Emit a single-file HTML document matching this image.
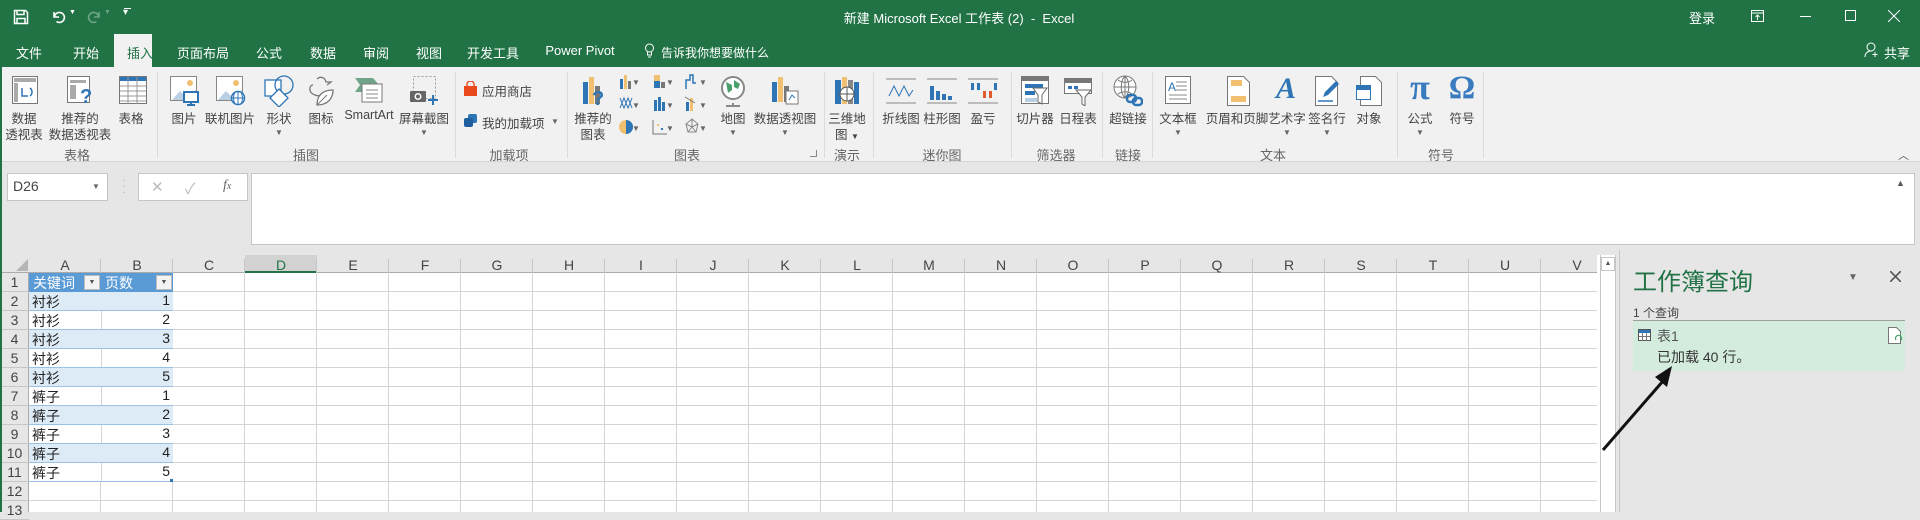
<!DOCTYPE html>
<html><head><meta charset="utf-8"><style>
*{margin:0;padding:0;box-sizing:border-box}
body{width:1920px;height:512px;overflow:hidden;position:relative;background:#e6e6e6;font-family:"Liberation Sans","Microsoft YaHei","Noto Sans CJK SC",sans-serif;color:#444}
.a{position:absolute;white-space:nowrap}
.c{transform:translateX(-50%);text-align:center}
#top{position:absolute;left:0;top:0;width:1920px;height:67px;background:#217346}
.w{color:#fff}
.tab{font-size:13px;color:#fff;top:43px}
#rib{position:absolute;left:0;top:67px;width:1920px;height:95px;background:#f1f1f1;border-bottom:1px solid #d5d5d5}
.l{font-size:12.5px;color:#444}
.g{font-size:13px;color:#666;top:145px}
.sep{position:absolute;top:72px;width:1px;height:86px;background:#dadada}
.dd{font-size:8px;color:#666}
.ic{position:absolute}
</style></head><body>
<div id="top"></div>
<div class="a" style="left:0;top:0;width:2px;height:512px;background:#217346;z-index:5"></div>
<svg class="ic" style="left:13px;top:9px" width="16" height="16" viewBox="0 0 16 16"><path d="M1.5 1.5h11l2 2v11h-13z M4 1.5v4h7v-4 M4 14.5v-5h8v5" fill="none" stroke="#fff" stroke-width="1.5"/></svg>
<svg class="ic" style="left:51px;top:9px" width="16" height="16" viewBox="0 0 16 16"><path d="M3 3v5h5 M3.5 7.5a5 5 0 1 1 2 5" fill="none" stroke="#fff" stroke-width="1.6"/></svg>
<div class="a w" style="left:69px;top:9px;font-size:7px">▼</div>
<svg class="ic" style="left:86px;top:9px" width="16" height="16" viewBox="0 0 16 16"><path d="M13 3v5h-5 M12.5 7.5a5 5 0 1 0 -2 5" fill="none" stroke="#6aa584" stroke-width="1.6"/></svg>
<div class="a" style="left:104px;top:9px;font-size:7px;color:#6aa584">▼</div>
<div class="a w" style="left:123px;top:7px;font-size:10px">▾</div>
<div class="a w" style="left:124px;top:8px;width:7px;height:1px;background:#fff"></div>
<div class="a w c" style="left:959px;top:8px;font-size:13px">新建 Microsoft Excel 工作表 (2)&nbsp; - &nbsp;Excel</div>
<div class="a w c" style="left:1702px;top:8px;font-size:13px">登录</div>
<svg class="ic" style="left:1751px;top:10px" width="13" height="12"><rect x=".5" y=".5" width="12" height="11" fill="none" stroke="#fff"/><path d="M1 3h11 M6.5 10V5 M4.5 7l2-2 2 2" stroke="#fff" fill="none"/></svg>
<div class="a" style="left:1800px;top:16px;width:11px;height:1px;background:#fff"></div>
<div class="a" style="left:1845px;top:10px;width:11px;height:11px;border:1px solid #fff"></div>
<svg class="ic" style="left:1888px;top:10px" width="12" height="12"><path d="M0 0L12 12M12 0L0 12" stroke="#fff"/></svg>
<div class="a" style="left:114px;top:34px;width:38px;height:34px;background:#f1f1f1"></div>
<div class="a tab c" style="left:29px">文件</div>
<div class="a tab c" style="left:86px">开始</div>
<div class="a tab c" style="left:140px;color:#217346">插入</div>
<div class="a tab c" style="left:203px">页面布局</div>
<div class="a tab c" style="left:269px">公式</div>
<div class="a tab c" style="left:323px">数据</div>
<div class="a tab c" style="left:376px">审阅</div>
<div class="a tab c" style="left:429px">视图</div>
<div class="a tab c" style="left:493px">开发工具</div>
<div class="a tab c" style="left:580px">Power Pivot</div>
<svg class="ic" style="left:644px;top:43px" width="11" height="15"><circle cx="5.5" cy="5" r="4" fill="none" stroke="#fff"/><path d="M3.5 9v3h4V9 M4 14h3" stroke="#fff" fill="none"/></svg>
<div class="a tab" style="left:661px;font-size:12px;top:44px">告诉我你想要做什么</div>
<svg class="ic" style="left:1864px;top:42px" width="16" height="16"><circle cx="7" cy="5" r="4" fill="none" stroke="#fff"/><path d="M1 15c0-4 3-6 6-6 M11 10v5 M8.5 12.5h5" stroke="#fff" fill="none"/></svg>
<div class="a tab" style="left:1884px">共享</div>
<div id="rib"></div>
<svg class="ic" style="left:12px;top:76px" width="26" height="28"><rect x=".5" y=".5" width="25" height="27" fill="#fff" stroke="#777"/><rect x="2" y="2" width="22" height="4" fill="#aaa"/><rect x="2" y="7" width="4" height="19" fill="#aaa"/><path d="M10 12v8h6 M18 20a5 5 0 0 0 0-8" stroke="#2e75b6" fill="none" stroke-width="1.5"/></svg>
<div class="a l c" style="left:24px;top:108px">数据</div><div class="a l c" style="left:24px;top:124px">透视表</div>
<svg class="ic" style="left:67px;top:76px" width="28" height="28"><rect x=".5" y=".5" width="22" height="26" fill="#fff" stroke="#777"/><rect x="3" y="4" width="16" height="3" fill="#aaa"/><rect x="3" y="9" width="6" height="14" fill="#aaa"/><text x="13" y="27" font-size="20" font-weight="bold" fill="#2e75b6" font-family="Liberation Sans">?</text></svg>
<div class="a l c" style="left:80px;top:108px">推荐的</div><div class="a l c" style="left:80px;top:124px">数据透视表</div>
<svg class="ic" style="left:119px;top:76px" width="28" height="28"><rect x=".5" y=".5" width="27" height="27" fill="#fff" stroke="#777"/><rect x="1" y="1" width="26" height="4" fill="#2e75b6"/><path d="M1 10h26M1 15h26M1 20h26M1 25h26M9 1v27M18 1v27" stroke="#999"/></svg>
<div class="a l c" style="left:131px;top:108px">表格</div>
<div class="a g c" style="left:77px">表格</div>
<div class="sep" style="left:157px"></div>
<svg class="ic" style="left:170px;top:76px" width="30" height="30"><rect x=".5" y=".5" width="26" height="24" fill="#fff" stroke="#888"/><path d="M2 24l8-9 6 6 10-7v10z" fill="#b9cfe4"/><circle cx="20" cy="7" r="3" fill="#f0c070"/><rect x="14" y="16" width="14" height="10" fill="#fff" stroke="#2e75b6" stroke-width="2"/><path d="M21 27v2M17 29h8" stroke="#2e75b6" stroke-width="2"/></svg>
<div class="a l c" style="left:184px;top:108px">图片</div>
<svg class="ic" style="left:216px;top:76px" width="30" height="30"><rect x=".5" y=".5" width="26" height="24" fill="#fff" stroke="#888"/><path d="M2 24l8-9 6 6 10-7v10z" fill="#b9cfe4"/><circle cx="20" cy="7" r="3" fill="#f0c070"/><circle cx="22" cy="22" r="6.5" fill="#fff" stroke="#2e75b6" stroke-width="1.5"/><path d="M15.5 22h13M22 15.5v13M19 16c-2 4-2 8 0 12M25 16c2 4 2 8 0 12" stroke="#2e75b6" fill="none"/></svg>
<div class="a l c" style="left:230px;top:108px">联机图片</div>
<svg class="ic" style="left:264px;top:75px" width="30" height="32"><rect x="1" y="5" width="16" height="16" fill="#fff" stroke="#2e75b6" stroke-width="1.3"/><circle cx="20" cy="10" r="9" fill="none" stroke="#2e75b6" stroke-width="1.3"/><path d="M15 14l9 9-9 9-9-9z" fill="#fff" stroke="#2e75b6" stroke-width="1.3"/></svg>
<div class="a l c" style="left:279px;top:108px">形状</div><div class="a dd c" style="left:279px;top:128px">▼</div>
<svg class="ic" style="left:307px;top:75px" width="28" height="32"><path d="M6 10c-4 0-5 8 2 10 2 1 4 1 6 0 M10 4c3-3 8-2 9 3l5 0-4 3" fill="none" stroke="#777" stroke-width="1.3"/><path d="M10 30c0-10 6-15 16-15 0 9-6 15-16 15z" fill="#fff" stroke="#777" stroke-width="1.3"/><path d="M10 30l10-10" stroke="#777"/></svg>
<div class="a l c" style="left:321px;top:108px">图标</div>
<svg class="ic" style="left:353px;top:76px" width="30" height="28"><path d="M2 2h18l6 7-6 7H2l5-7z" fill="#70a58a"/><rect x="9" y="8" width="20" height="18" fill="#fff" stroke="#777"/><path d="M13 14h12M13 18h12M13 22h12" stroke="#888"/></svg>
<div class="a l c" style="left:369px;top:108px">SmartArt</div>
<svg class="ic" style="left:409px;top:76px" width="30" height="30"><rect x="4.5" y=".5" width="22" height="22" fill="none" stroke="#999" stroke-dasharray="2 2"/><rect x="1" y="15" width="16" height="11" rx="1" fill="#666"/><circle cx="9" cy="20.5" r="3.5" fill="#fff"/><circle cx="9" cy="20.5" r="2" fill="#666"/><path d="M24 19v10M19 24h10" stroke="#2e75b6" stroke-width="2"/></svg>
<div class="a l c" style="left:424px;top:108px">屏幕截图</div><div class="a dd c" style="left:424px;top:128px">▼</div>
<div class="a g c" style="left:306px">插图</div>
<div class="sep" style="left:455px"></div>
<svg class="ic" style="left:463px;top:81px" width="15" height="16"><path d="M1 5h13v10H1z" fill="#e8481c"/><path d="M4 5V3a3.5 3 0 0 1 7 0v2" fill="none" stroke="#e8481c" stroke-width="1.4"/></svg>
<div class="a l" style="left:482px;top:81px">应用商店</div>
<svg class="ic" style="left:463px;top:113px" width="15" height="15"><rect x="5" y="1" width="9" height="9" rx="2" fill="#2e75b6"/><rect x="1" y="5" width="9" height="9" rx="2" fill="#1f5fa0"/></svg>
<div class="a l" style="left:482px;top:113px">我的加载项</div><div class="a dd" style="left:551px;top:117px">▼</div>
<div class="a g c" style="left:509px">加载项</div>
<div class="sep" style="left:567px"></div>
<svg class="ic" style="left:580px;top:76px" width="28" height="30"><rect x="3" y="6" width="5" height="22" fill="#2e75b6"/><rect x="9" y="1" width="5" height="27" fill="#f0c070"/><rect x="15" y="10" width="5" height="18" fill="#777"/><text x="12" y="29" font-size="20" font-weight="bold" fill="#2e75b6" font-family="Liberation Sans">?</text></svg>
<div class="a l c" style="left:593px;top:108px">推荐的</div><div class="a l c" style="left:593px;top:124px">图表</div>
<svg class="ic" style="left:618px;top:74px" width="90" height="64">
<rect x="2" y="5" width="3" height="10" fill="#2e75b6"/><rect x="6" y="1" width="3" height="14" fill="#f0c070"/><rect x="10" y="7" width="3" height="8" fill="#777"/>
<rect x="36" y="1" width="6" height="13" fill="#2e75b6"/><rect x="36" y="1" width="6" height="6" fill="#f0c070"/><rect x="43" y="8" width="4" height="6" fill="#777"/>
<path d="M68 15V6h4V1h3v8h3" fill="none" stroke="#2e75b6" stroke-width="1.5"/>
<path d="M2 24l4 10 4-10 4 10M2 34l4-10 4 10 4-10" fill="none" stroke="#2e75b6"/>
<rect x="36" y="26" width="3" height="11" fill="#2e75b6"/><rect x="40" y="23" width="3" height="14" fill="#2e75b6"/><rect x="44" y="28" width="3" height="9" fill="#2e75b6"/>
<rect x="68" y="28" width="3" height="9" fill="#2e75b6"/><rect x="72" y="24" width="3" height="13" fill="#f0c070"/><path d="M67 23l10 6" stroke="#777"/>
<circle cx="8" cy="53" r="7" fill="#f0c070"/><path d="M8 53V46a7 7 0 0 1 0 14z" fill="#2e75b6"/>
<path d="M35 46v14h14" stroke="#777" fill="none"/><rect x="39" y="50" width="2" height="2" fill="#f0c070"/><rect x="43" y="54" width="2" height="2" fill="#2e75b6"/>
<path d="M74 45l6 5-2 8h-8l-2-8z M74 45v8l6-3M74 53l4 5M74 53l-4 5M74 53l-6-3" fill="none" stroke="#888"/>
</svg>
<div class="a dd" style="left:632px;top:78px">▼</div><div class="a dd" style="left:666px;top:78px">▼</div><div class="a dd" style="left:699px;top:78px">▼</div>
<div class="a dd" style="left:632px;top:101px">▼</div><div class="a dd" style="left:666px;top:101px">▼</div><div class="a dd" style="left:699px;top:101px">▼</div>
<div class="a dd" style="left:632px;top:124px">▼</div><div class="a dd" style="left:666px;top:124px">▼</div><div class="a dd" style="left:699px;top:124px">▼</div>
<svg class="ic" style="left:719px;top:75px" width="28" height="32"><path d="M14 28v3M7 31h14" stroke="#888" stroke-width="2"/><circle cx="14" cy="13" r="11" fill="#fff" stroke="#888" stroke-width="2"/><path d="M7 7l6 3 0 5-4 3zM15 5l6 4-2 5-4-2z" fill="#4aa06a"/></svg>
<div class="a l c" style="left:733px;top:108px">地图</div><div class="a dd c" style="left:733px;top:128px">▼</div>
<svg class="ic" style="left:771px;top:76px" width="28" height="30"><rect x="1" y="6" width="5" height="20" fill="#2e75b6"/><rect x="7" y="1" width="5" height="25" fill="#f0c070"/><rect x="13" y="10" width="5" height="16" fill="#777"/><rect x="15" y="15" width="12" height="13" fill="#fff" stroke="#777"/><path d="M18 24l3-5 3 3" stroke="#2e75b6" fill="none"/></svg>
<div class="a l c" style="left:785px;top:108px">数据透视图</div><div class="a dd c" style="left:785px;top:128px">▼</div>
<div class="a g c" style="left:687px">图表</div>
<div class="a" style="left:810px;top:150px;width:7px;height:7px;border-right:1px solid #888;border-bottom:1px solid #888"></div>
<div class="sep" style="left:824px"></div>
<svg class="ic" style="left:833px;top:76px" width="28" height="30"><rect x="2" y="4" width="6" height="24" fill="#2e75b6"/><rect x="9" y="1" width="5" height="27" fill="#f0c070"/><rect x="15" y="4" width="5" height="24" fill="#888"/><rect x="21" y="6" width="5" height="22" fill="#2e75b6"/><circle cx="14" cy="18" r="7" fill="#fff" stroke="#555"/><path d="M7 18h14M14 11v14" stroke="#555"/></svg>
<div class="a l c" style="left:847px;top:108px">三维地</div><div class="a l c" style="left:847px;top:124px">图 <span style="font-size:8px">▼</span></div>
<div class="a g c" style="left:847px">演示</div>
<div class="sep" style="left:873px"></div>
<svg class="ic" style="left:886px;top:78px" width="30" height="26"><path d="M0 1h30M0 25h30" stroke="#888"/><path d="M3 18l5-10 5 10 5-10 5 10 4-6" fill="none" stroke="#2e75b6"/></svg>
<div class="a l c" style="left:901px;top:108px">折线图</div>
<svg class="ic" style="left:927px;top:78px" width="30" height="26"><path d="M0 1h30M0 25h30" stroke="#888"/><rect x="3" y="8" width="4" height="14" fill="#2e75b6"/><rect x="9" y="13" width="4" height="9" fill="#2e75b6"/><rect x="15" y="16" width="4" height="6" fill="#2e75b6"/><rect x="21" y="18" width="4" height="4" fill="#2e75b6"/></svg>
<div class="a l c" style="left:942px;top:108px">柱形图</div>
<svg class="ic" style="left:968px;top:78px" width="30" height="26"><path d="M0 1h30M0 25h30" stroke="#888"/><rect x="3" y="5" width="3" height="7" fill="#2e75b6"/><rect x="9" y="5" width="3" height="7" fill="#2e75b6"/><rect x="15" y="13" width="3" height="7" fill="#e05a2b"/><rect x="21" y="13" width="3" height="7" fill="#e05a2b"/><rect x="26" y="5" width="3" height="7" fill="#2e75b6"/></svg>
<div class="a l c" style="left:983px;top:108px">盈亏</div>
<div class="a g c" style="left:942px">迷你图</div>
<div class="sep" style="left:1011px"></div>
<svg class="ic" style="left:1021px;top:76px" width="28" height="30"><rect x=".5" y=".5" width="27" height="27" fill="#fff" stroke="#777"/><rect x="1" y="1" width="26" height="4" fill="#777"/><rect x="4" y="8" width="18" height="4" fill="#2e75b6"/><rect x="4" y="15" width="10" height="4" fill="#2e75b6"/><rect x="4" y="22" width="12" height="4" fill="#b9cfe4"/><path d="M12 12h14l-5 7v9l-4-2v-7z" fill="#fff" stroke="#666"/></svg>
<div class="a l c" style="left:1035px;top:108px">切片器</div>
<svg class="ic" style="left:1064px;top:78px" width="28" height="28"><rect x=".5" y=".5" width="27" height="15" fill="#fff" stroke="#777"/><rect x="1" y="1" width="26" height="4" fill="#777"/><rect x="4" y="8" width="4" height="3" fill="#2e75b6"/><rect x="10" y="8" width="4" height="3" fill="#2e75b6"/><path d="M12 12h15l-6 7v9l-3-2v-7z" fill="#fff" stroke="#666"/></svg>
<div class="a l c" style="left:1078px;top:108px">日程表</div>
<div class="a g c" style="left:1056px">筛选器</div>
<div class="sep" style="left:1102px"></div>
<svg class="ic" style="left:1113px;top:75px" width="30" height="32"><circle cx="12" cy="12" r="11" fill="#fff" stroke="#777"/><path d="M1 12h22M12 1v22M5 5c4 3 10 3 14 0M5 19c4-3 10-3 14 0M12 1c-5 5-5 17 0 22M12 1c5 5 5 17 0 22" fill="none" stroke="#777"/><rect x="14" y="20" width="9" height="7" rx="3" fill="none" stroke="#2e75b6" stroke-width="2.5"/><rect x="20" y="23" width="9" height="7" rx="3" fill="none" stroke="#2e75b6" stroke-width="2.5"/></svg>
<div class="a l c" style="left:1128px;top:108px">超链接</div>
<div class="a g c" style="left:1128px">链接</div>
<div class="sep" style="left:1152px"></div>
<svg class="ic" style="left:1165px;top:76px" width="26" height="28"><rect x=".5" y=".5" width="25" height="27" fill="#fff" stroke="#777"/><text x="3" y="15" font-size="12" fill="#2e75b6" font-family="Liberation Sans">A</text><path d="M11 6h11M11 10h11M11 14h11M4 19h18M4 23h18" stroke="#888"/></svg>
<div class="a l c" style="left:1178px;top:108px">文本框</div><div class="a dd c" style="left:1178px;top:128px">▼</div>
<svg class="ic" style="left:1227px;top:76px" width="24" height="30"><path d="M.5 .5h16l6 6v23H.5z" fill="#fff" stroke="#777"/><rect x="4" y="4" width="11" height="6" fill="#f0c070"/><rect x="4" y="20" width="15" height="6" fill="#f0c070"/></svg>
<div class="a l c" style="left:1237px;top:108px">页眉和页脚</div>
<div class="a c" style="left:1286px;top:72px;font-size:30px;font-style:italic;font-weight:bold;color:#2e75b6;font-family:'Liberation Serif',serif">A</div>
<div class="a l c" style="left:1287px;top:108px">艺术字</div><div class="a dd c" style="left:1287px;top:128px">▼</div>
<svg class="ic" style="left:1315px;top:76px" width="26" height="30"><path d="M.5 .5h16l6 6v23H.5z" fill="#fff" stroke="#777"/><path d="M3 25h15" stroke="#2e75b6" stroke-width="1.5"/><path d="M8 21l2-5 11-11 3 3-11 11z" fill="#2e75b6"/></svg>
<div class="a l c" style="left:1327px;top:108px">签名行</div><div class="a dd c" style="left:1327px;top:128px">▼</div>
<svg class="ic" style="left:1356px;top:76px" width="26" height="30"><path d="M4.5 .5h15l6 6v23h-21z" fill="#fff" stroke="#777"/><rect x=".5" y="9.5" width="14" height="14" fill="#fff" stroke="#2e75b6"/><rect x="1" y="10" width="13" height="4" fill="#2e75b6"/></svg>
<div class="a l c" style="left:1369px;top:108px">对象</div>
<div class="a g c" style="left:1273px">文本</div>
<div class="sep" style="left:1397px"></div>
<div class="a c" style="left:1420px;top:66px;font-size:36px;font-weight:bold;color:#3a7bbf;font-family:'Liberation Serif',serif">π</div>
<div class="a l c" style="left:1420px;top:108px">公式</div><div class="a dd c" style="left:1420px;top:128px">▼</div>
<div class="a c" style="left:1462px;top:70px;font-size:33px;font-weight:bold;color:#3a7bbf;font-family:'Liberation Serif',serif">Ω</div>
<div class="a l c" style="left:1462px;top:108px">符号</div>
<div class="a g c" style="left:1441px">符号</div>
<div class="sep" style="left:1483px"></div>
<div class="a" style="left:1898px;top:147px;font-size:11px;color:#555">︿</div>
<div class="a" style="left:7px;top:173px;width:101px;height:28px;background:#fff;border:1px solid #c6c6c6"></div>
<div class="a" style="left:13px;top:178px;font-size:14px;color:#444">D26</div>
<div class="a dd" style="left:92px;top:182px">▼</div>
<div class="a" style="left:122px;top:178px;font-size:10px;color:#aaa;line-height:6px">·<br>·<br>·</div>
<div class="a" style="left:138px;top:173px;width:110px;height:28px;background:#fff;border:1px solid #c6c6c6"></div>
<div class="a" style="left:151px;top:178px;font-size:15px;color:#bbb">✕</div>
<div class="a" style="left:185px;top:178px;font-size:15px;color:#bbb">✓</div>
<div class="a" style="left:223px;top:178px;font-size:14px;color:#666;font-style:italic;font-family:'Liberation Serif',serif">f<span style="font-size:10px">x</span></div>
<div class="a" style="left:251px;top:173px;width:1664px;height:72px;background:#fff;border:1px solid #c6c6c6"></div>
<div class="a" style="left:1896px;top:178px;font-size:9px;color:#555">▲</div>
<div class="a" style="left:0;top:255px;width:1600px;height:257px;background:#fff"></div>
<div class="a" style="left:0;top:255px;width:1597px;height:18px;background:#e6e6e6;border-bottom:1px solid #ababab"></div>
<div class="a" style="left:245px;top:255px;width:72px;height:18px;background:#d2d2d2;border-bottom:2px solid #217346"></div>
<div class="a" style="left:0;top:273px;width:29px;height:239px;background:#e6e6e6;border-right:1px solid #ababab"></div>
<svg class="ic" style="left:16px;top:259px" width="12" height="12"><path d="M12 0v12H0z" fill="#b5b5b5"/></svg>
<div class="a" style="left:29px;top:273px;width:1568px;height:239px;background-image:linear-gradient(to right,#d4d4d4 1px,transparent 1px),linear-gradient(to bottom,transparent 18px,#d4d4d4 18px);background-size:72px 19px;background-position:71px 0,0 0"></div>
<div id="hdr"></div>
<div class="a" style="left:29px;top:273px;width:144px;height:19px;background:#5b9bd5"></div>
<div class="a" style="left:29px;top:292px;width:144px;height:190px;background-image:linear-gradient(to bottom,#ddebf7 18px,#9bc2e6 18px,#9bc2e6 19px,#fff 19px,#fff 37px,#9bc2e6 37px);background-size:144px 38px"></div>
<div id="cells"></div>
<div class="a" style="left:84px;top:275px;width:16px;height:15px;background:#f3f3f3;border:1px solid #bbb;font-size:7px;text-align:center;line-height:13px;color:#555">▼</div>
<div class="a" style="left:156px;top:275px;width:16px;height:15px;background:#f3f3f3;border:1px solid #bbb;font-size:7px;text-align:center;line-height:13px;color:#555">▼</div>
<div class="a" style="left:170px;top:479px;width:3px;height:3px;background:#2e75b6"></div>
<div class="a" style="left:1600px;top:255px;width:16px;height:257px;background:#fff;border-left:1px solid #c6c6c6;border-right:1px solid #c6c6c6"></div>
<div class="a" style="left:1601px;top:257px;width:14px;height:14px;border:1px solid #c6c6c6;font-size:7px;text-align:center;color:#555;line-height:12px">▲</div>
<div class="a" style="left:1619px;top:250px;width:301px;height:262px;background:#e6e6e6;border-left:1px solid #c6c6c6"></div>
<div class="a" style="left:1633px;top:262px;font-size:24px;color:#217346">工作簿查询</div>
<div class="a" style="left:1848px;top:272px;font-size:10px;color:#666">▼</div>
<svg class="ic" style="left:1890px;top:271px" width="11" height="11"><path d="M0 0L11 11M11 0L0 11" stroke="#555" stroke-width="1.6"/></svg>
<div class="a" style="left:1633px;top:304px;font-size:12px;color:#444">1 个查询</div>
<div class="a" style="left:1633px;top:320px;width:272px;height:1px;background:#a0a0a0"></div>
<div class="a" style="left:1633px;top:321px;width:272px;height:50px;background:#d3ecde"></div>
<svg class="ic" style="left:1638px;top:329px" width="13" height="12"><rect x=".5" y=".5" width="12" height="11" fill="#fff" stroke="#555"/><rect x="1" y="1" width="11" height="3" fill="#2e75b6"/><path d="M1 7.5h11M4.5 4v8M8.5 4v8" stroke="#777"/></svg>
<div class="a" style="left:1657px;top:326px;font-size:14px;color:#555">表1</div>
<svg class="ic" style="left:1888px;top:327px" width="15" height="18"><path d="M.5 .5h8l4 4v12H.5z" fill="#fff" stroke="#777"/><path d="M8 13a3 3 0 1 1 5 0" fill="none" stroke="#4aa06a" stroke-width="1.3"/></svg>
<div class="a" style="left:1657px;top:347px;font-size:14px;color:#333">已加载 40 行。</div>
<svg class="ic" style="left:1595px;top:355px" width="90" height="100"><path d="M8 95L68 26" stroke="#111" stroke-width="3"/><path d="M77 11L60 22 72 32z" fill="#111"/></svg>
<script>
var L="ABCDEFGHIJKLMNOPQRSTUV",h="";
for(var i=0;i<22;i++){h+='<div class="a c" style="left:'+(29+i*72+36)+'px;top:257px;font-size:14px;color:'+(i==3?'#217346':'#444')+'">'+L[i]+'</div>';
if(i<21)h+='<div class="a" style="left:'+(29+i*72+71)+'px;top:259px;width:1px;height:14px;background:#c6c6c6"></div>';}
for(var r=1;r<=13;r++){h+='<div class="a" style="left:0;width:29px;text-align:center;top:'+(273+(r-1)*19+1)+'px;font-size:14px;color:#444">'+r+'</div>';
h+='<div class="a" style="left:0;width:29px;height:1px;background:#c6c6c6;top:'+(273+r*19-1)+'px"></div>';}
document.getElementById('hdr').outerHTML=h;
var c='<div class="a" style="left:33px;top:273px;font-size:14px;color:#fff">关键词</div><div class="a" style="left:105px;top:273px;font-size:14px;color:#fff">页数</div>';
for(var r=2;r<=11;r++){var y=273+(r-1)*19;c+='<div class="a" style="left:32px;top:'+y+'px;font-size:14px;color:#222">'+(r<=6?'衬衫':'裤子')+'</div><div class="a" style="left:101px;width:69px;text-align:right;top:'+y+'px;font-size:14px;color:#222">'+((r-2)%5+1)+'</div>';
if(r%2==1)c+='<div class="a" style="left:101px;top:'+y+'px;width:1px;height:18px;background:#d4d4d4"></div>';}
document.getElementById('cells').outerHTML=c;
</script>
</body></html>
